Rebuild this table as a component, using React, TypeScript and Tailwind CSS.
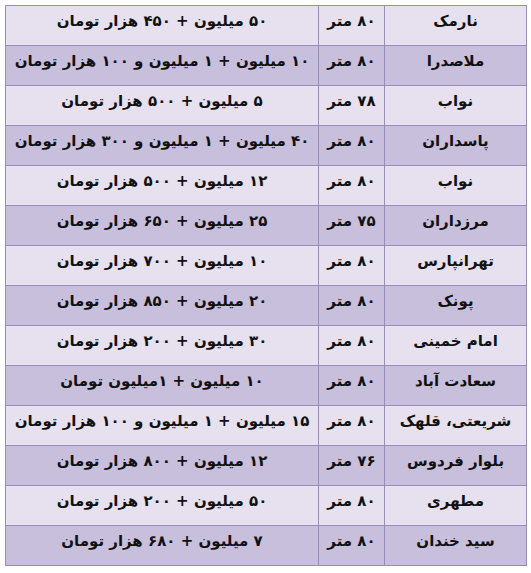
const rows = [
  ["نارمک", "۸۰ متر", "۵۰ میلیون + ۴۵۰ هزار تومان"],
  ["ملاصدرا", "۸۰ متر", "۱۰ میلیون + ۱ میلیون و ۱۰۰ هزار تومان"],
  ["نواب", "۷۸ متر", "۵ میلیون + ۵۰۰ هزار تومان"],
  ["پاسداران", "۸۰ متر", "۴۰ میلیون + ۱ میلیون و ۳۰۰ هزار تومان"],
  ["نواب", "۸۰ متر", "۱۲ میلیون + ۵۰۰ هزار تومان"],
  ["مرزداران", "۷۵ متر", "۲۵ میلیون + ۶۵۰ هزار تومان"],
  ["تهرانپارس", "۸۰ متر", "۱۰ میلیون + ۷۰۰ هزار تومان"],
  ["پونک", "۸۰ متر", "۲۰ میلیون + ۸۵۰ هزار تومان"],
  ["امام خمینی", "۸۰ متر", "۳۰ میلیون + ۲۰۰ هزار تومان"],
  ["سعادت آباد", "۸۰ متر", "۱۰ میلیون + ۱میلیون تومان"],
  ["شریعتی، قلهک", "۸۰ متر", "۱۵ میلیون + ۱ میلیون و ۱۰۰ هزار تومان"],
  ["بلوار فردوس", "۷۶ متر", "۱۲ میلیون + ۸۰۰ هزار تومان"],
  ["مطهری", "۸۰ متر", "۵۰ میلیون + ۲۰۰ هزار تومان"],
  ["سید خندان", "۸۰ متر", "۷ میلیون + ۶۸۰ هزار تومان"],
];

export default function App() {
  return (
    <div className="min-h-[573px] w-[531px] bg-white pl-[5px] pt-[5px]">
      <table
        dir="rtl"
        className="w-[521px] table-fixed border-collapse font-['DejaVu_Sans',sans-serif] text-[15px] font-bold text-[#111]"
      >
        <colgroup>
          <col className="w-[142px]" />
          <col className="w-[66px]" />
          <col className="w-[313px]" />
        </colgroup>
        <tbody>
          {rows.map((r, i) => (
            <tr
              key={i}
              className={
                i % 2 === 0 ? "h-[40px] bg-[#e6e0ef]" : "h-[40px] bg-[#c7bfdc]"
              }
            >
              {r.map((c, j) => (
                <td
                  key={j}
                  className="whitespace-nowrap border border-[#988db5] px-0 pt-[5px] text-center align-top leading-[20px]"
                >
                  {c}
                </td>
              ))}
            </tr>
          ))}
        </tbody>
      </table>
    </div>
  );
}
